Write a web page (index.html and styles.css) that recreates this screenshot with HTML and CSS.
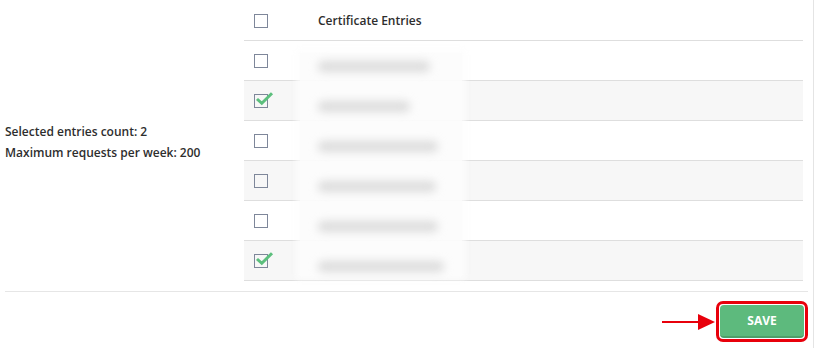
FILE: index.html
```html
<!DOCTYPE html>
<html lang="en">
  <head>
    <meta charset="UTF-8" />
    <meta name="viewport" content="width=device-width, initial-scale=1.0" />
    <title>Certificate Entries</title>
    <link rel="stylesheet" href="styles.css">
  </head>
  <body>
    <div class="panel">
      <div class="form-row">
        <div class="info">
          <div>Selected entries count: 2</div>
          <div>Maximum requests per week: 200</div>
        </div>

        <div class="table-wrap">
          <table class="entries">
            <thead>
              <tr>
                <th class="check-col"><span class="box"></span></th>
                <th>Certificate Entries</th>
              </tr>
            </thead>
            <tbody>
              <tr>
                <td class="check-col"><span class="box"></span></td>
                <td></td>
              </tr>
              <tr>
                <td class="check-col">
                  <span class="box checked">
                    <svg class="tick" width="19" height="15" viewBox="0 0 19 15"><path d="M2 8 L6.8 12.3 L17 2.2" fill="none" stroke="#5cbf7d" stroke-width="3" /></svg>
                  </span>
                </td>
                <td></td>
              </tr>
              <tr>
                <td class="check-col"><span class="box"></span></td>
                <td></td>
              </tr>
              <tr>
                <td class="check-col"><span class="box"></span></td>
                <td></td>
              </tr>
              <tr>
                <td class="check-col"><span class="box"></span></td>
                <td></td>
              </tr>
              <tr>
                <td class="check-col">
                  <span class="box checked">
                    <svg class="tick" width="19" height="15" viewBox="0 0 19 15"><path d="M2 8 L6.8 12.3 L17 2.2" fill="none" stroke="#5cbf7d" stroke-width="3" /></svg>
                  </span>
                </td>
                <td></td>
              </tr>
            </tbody>
          </table>

          <!-- redacted entry names -->
          <div class="redact">
            <span class="bar" style="width: 112px"></span>
            <span class="bar" style="width: 92px"></span>
            <span class="bar" style="width: 120px"></span>
            <span class="bar" style="width: 118px"></span>
            <span class="bar" style="width: 120px"></span>
            <span class="bar" style="width: 126px"></span>
          </div>
        </div>
      </div>

      <div class="footer">
        <div class="pointer">
          <span class="shaft"></span>
          <span class="head"></span>
        </div>
        <div class="highlight">
          <button class="save">SAVE</button>
        </div>
      </div>
    </div>
  </body>
</html>
```

FILE: styles.css
```css
body {
  margin: 0;
  background-color: #fff;
  font-family: "Open Sans", "Liberation Sans", sans-serif;
  color: #333;
}

.panel {
  width: 798px;
  height: 348px;
  padding: 0 10px 0 5px;
  border-right: 1px solid #e4e4e4;
}

.form-row {
  display: flex;
}

.info {
  width: 239px;
  display: flex;
  flex-direction: column;
  justify-content: center;
  gap: 5px;
  padding-top: 3px;
  font-size: 12px;
  font-weight: 600;
  line-height: 16px;
  color: #2e2e2e;
}

.table-wrap {
  position: relative;
  flex: 1;
}

.entries {
  width: 100%;
  border-collapse: collapse;
  font-size: 12px;
}

.entries th,
.entries td {
  height: 39px;
  padding: 0;
  border-bottom: 1px solid #dedede;
  text-align: left;
  vertical-align: middle;
}

.entries th {
  font-weight: 600;
  padding-top: 1px;
  color: #2e2e2e;
}

.entries tbody tr:nth-child(even) {
  background-color: #f7f7f7;
}

.check-col {
  width: 74px;
}

.box {
  position: relative;
  display: block;
  width: 12px;
  height: 12px;
  margin-left: 10px;
  border: 1.5px solid #7e879a;
}

.tick {
  position: absolute;
  left: 0;
  top: -4px;
}

.redact {
  position: absolute;
  left: 56px;
  top: 53px;
  width: 162px;
  height: 223px;
  background-color: rgba(252, 252, 252, 0.92);
  box-shadow: 0 0 6px 4px rgba(252, 252, 252, 0.8);
  display: flex;
  flex-direction: column;
  gap: 29px;
  padding-top: 8px;
  box-sizing: border-box;
}

.bar {
  display: block;
  height: 11px;
  margin-left: 18px;
  background-color: #dcdcdc;
  border-radius: 6px;
  filter: blur(4px);
}

.footer {
  margin-top: 10px;
  border-top: 1px solid #e6e6e6;
  display: flex;
  justify-content: flex-end;
  align-items: center;
  padding-top: 9px;
  margin-right: -5px;
}

.pointer {
  display: flex;
  align-items: center;
  margin-right: 1px;
}

.shaft {
  width: 36px;
  height: 2px;
  background-color: #e8000b;
}

.head {
  width: 0;
  height: 0;
  border-top: 8px solid transparent;
  border-bottom: 8px solid transparent;
  border-left: 17px solid #e8000b;
}

.highlight {
  border: 3px solid #e8000b;
  border-radius: 7px;
  padding: 1px;
}

.save {
  display: block;
  width: 84px;
  height: 33px;
  border: none;
  border-bottom: 2px solid #4e9f69;
  border-radius: 4px;
  background-color: #5dba7d;
  color: #fff;
  font-family: "Open Sans", "Liberation Sans", sans-serif;
  font-size: 12px;
  font-weight: 700;
  cursor: pointer;
}
```
